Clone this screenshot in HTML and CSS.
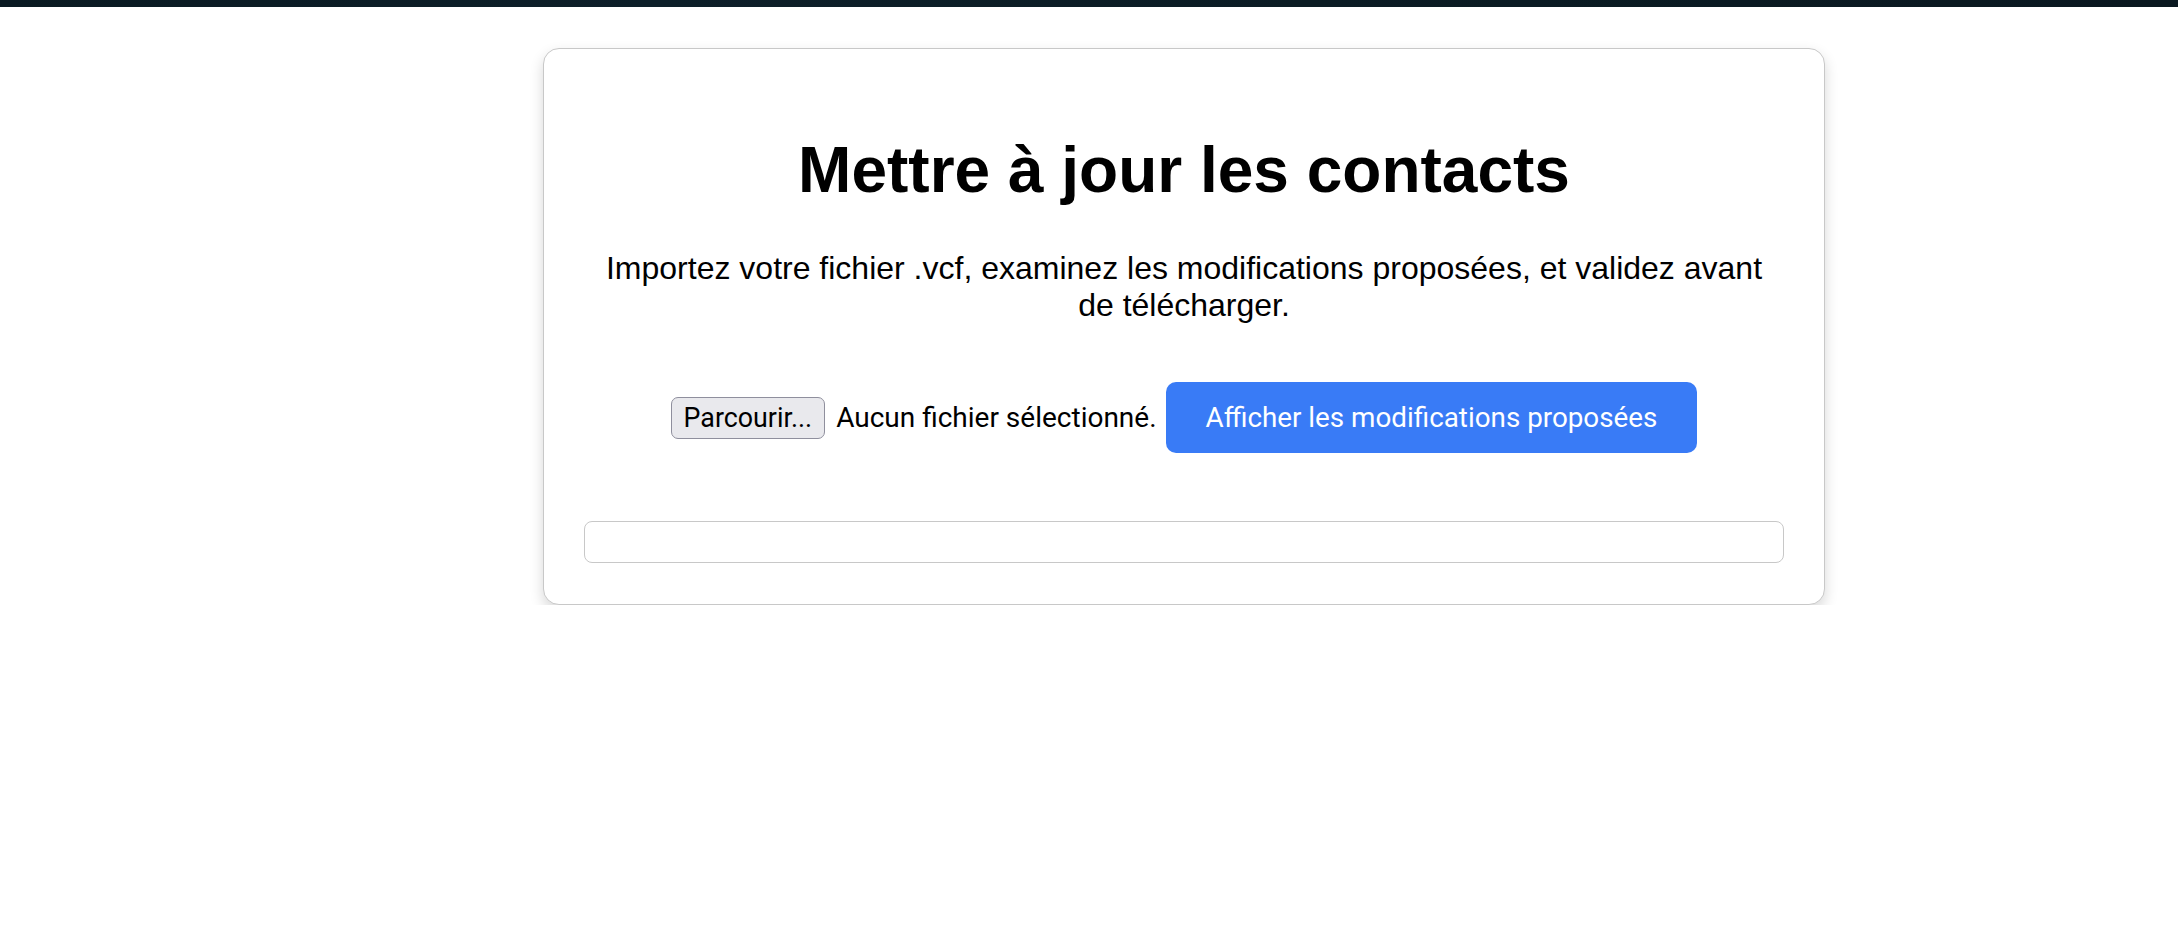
FILE: index.html
```html
<!DOCTYPE html>
<html lang="fr">
<head>
<meta charset="utf-8">
<title>Mettre à jour les contacts</title>
<link rel="stylesheet" href="styles.css">
</head>
<body>
<div class="topbar"></div>
<div class="layout">
  <aside class="sidebar"></aside>
  <main class="main">
    <section class="card">
      <h1 class="title">Mettre à jour les contacts</h1>
      <p class="lead">Importez votre fichier .vcf, examinez les modifications proposées, et validez avant de télécharger.</p>
      <form class="upload-row">
        <label class="file-input">
          <span class="file-btn">Parcourir...</span>
          <span class="file-name">Aucun fichier sélectionné.</span>
        </label>
        <button type="button" class="primary-btn">Afficher les modifications proposées</button>
      </form>
      <div class="results"></div>
    </section>
  </main>
</div>
</body>
</html>
```

FILE: styles.css
```css
html, body {
  margin: 0;
  padding: 0;
  background: #ffffff;
}

body {
  font-family: "Liberation Sans", Arial, sans-serif;
  color: #000;
}

.topbar {
  height: 7px;
  background: linear-gradient(90deg, #0a1a22 0%, #0d1f29 30%, #0b1c24 60%, #0a1820 100%);
}

.layout {
  display: grid;
  grid-template-columns: 190px 1fr;
}

.main {
  display: flex;
  justify-content: center;
  padding-top: 41px;
}

.card {
  width: 1200px;
  padding: 40px 40px 41px;
  border: 1px solid #c8c8c8;
  border-radius: 16px;
  box-shadow: 0 6px 14px rgba(0, 0, 0, 0.16);
  background: #fff;
}

.title {
  font-size: 64px;
  font-weight: bold;
  text-align: center;
  margin: 44px 0 43px;
}

.lead {
  font-size: 32px;
  text-align: center;
  margin: 0;
}

.upload-row {
  display: flex;
  justify-content: center;
  align-items: center;
  gap: 9px;
  margin-top: 58px;
}

.file-input {
  display: flex;
  align-items: center;
  gap: 11px;
  font-family: Roboto, "Liberation Sans", sans-serif;
}

.file-btn {
  box-sizing: border-box;
  height: 42px;
  padding: 0 12px;
  display: flex;
  align-items: center;
  font-size: 26.8px;
  background: #e9e9ed;
  border: 1.5px solid #8f8f9d;
  border-radius: 7px;
  color: #000;
}

.file-name {
  font-size: 28px;
  color: #000;
}

.primary-btn {
  font-family: Roboto, "Liberation Sans", sans-serif;
  font-size: 27.8px;
  color: #fff;
  background: #397bf6;
  border: none;
  border-radius: 10px;
  height: 71px;
  padding: 0 40px;
}

.results {
  margin-top: 68px;
  height: 40px;
  border: 1.5px solid #c8c8c8;
  border-radius: 8px;
}
```
